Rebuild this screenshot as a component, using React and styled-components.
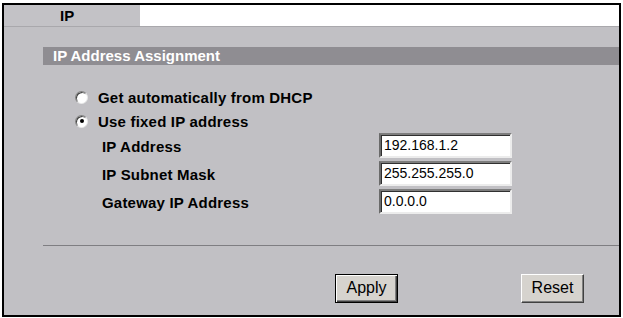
import React from 'react'
import styled, { createGlobalStyle } from 'styled-components'

const GlobalStyle = createGlobalStyle`
  html, body {
    margin: 0;
    padding: 0;
    background: #fff;
  }
  body {
    font-family: "Liberation Sans", Arial, sans-serif;
  }
`

const Frame = styled.div`
  box-sizing: border-box;
  margin: 3px 2px 0 2px;
  height: 314px;
  border: 2px solid #000;
  background: #c1c0c4;
  display: flex;
  flex-direction: column;
`

const TabBar = styled.div`
  display: flex;
  height: 21px;
  border-bottom: 1px solid #a9a8ac;
`

const Tab = styled.div`
  width: 136px;
  padding-left: 56px;
  box-sizing: border-box;
  background: #c3c2c6;
  font-weight: bold;
  font-size: 15px;
  line-height: 21px;
  color: #000;
`

const TabFill = styled.div`
  flex: 1;
  background: #fff;
`

const Body = styled.div`
  flex: 1;
  display: flex;
  flex-direction: column;
`

const SectionBar = styled.div`
  margin: 20px 0 0 39px;
  height: 18px;
  padding-left: 10px;
  background: #8f8d92;
  color: #fff;
  font-weight: bold;
  font-size: 15px;
  line-height: 18px;
`

const Options = styled.div`
  margin-top: 20px;
  padding-left: 71px;
  display: flex;
  flex-direction: column;
`

const RadioRow = styled.label`
  display: flex;
  align-items: center;
  height: 24px;
  gap: 10px;
  font-weight: bold;
  font-size: 15px;
  letter-spacing: 0.2px;
  color: #000;
`

const RadioDot = styled.span`
  box-sizing: border-box;
  width: 13px;
  height: 13px;
  border-radius: 50%;
  background: #fff;
  border: 1px solid;
  border-color: #808080 #e8e8e8 #e8e8e8 #808080;
  box-shadow: inset 1px 1px 0 #404040;
  display: flex;
  align-items: center;
  justify-content: center;
  &::after {
    content: '';
    width: 4px;
    height: 4px;
    border-radius: 50%;
    background: ${p => (p.checked ? '#000' : 'transparent')};
  }
`

const Fields = styled.div`
  display: flex;
  flex-direction: column;
  gap: 3px;
  padding-left: 27px;
`

const FieldRow = styled.div`
  display: flex;
  align-items: center;
  height: 25px;
`

const FieldLabel = styled.span`
  width: 277px;
  padding-top: 2px;
  font-weight: bold;
  font-size: 15px;
  letter-spacing: 0.2px;
  color: #000;
`

const TextBox = styled.div`
  box-sizing: border-box;
  width: 133px;
  height: 25px;
  background: #fff;
  border: 2px solid;
  border-color: #7d7d7d #ececec #ececec #6a6a6a;
  box-shadow: inset 1px 1px 0 #303030;
  padding: 0 0 0 3px;
  font-size: 14px;
  line-height: 21px;
  color: #000;
`

const Separator = styled.hr`
  margin: 31px 0 0 39px;
  border: none;
  border-top: 1px solid #7f7e82;
  height: 0;
`

const ButtonRow = styled.div`
  display: flex;
  margin-top: 28px;
  padding-left: 331px;
  gap: 123px;
`

const Button = styled.div`
  box-sizing: border-box;
  width: 63px;
  height: 29px;
  background: #d6d3ce;
  border: 1px solid;
  border-color: ${p => (p.primary ? '#000' : '#fff #404040 #404040 #fff')};
  box-shadow: ${p =>
    p.primary
      ? 'inset 1px 1px 0 #fff, inset -1px -1px 0 #404040, inset -2px -2px 0 #808080'
      : 'inset -1px -1px 0 #808080'};
  font-size: 16px;
  line-height: 26px;
  text-align: center;
  color: #000;
`

const fields = [
  { label: 'IP Address', value: '192.168.1.2' },
  { label: 'IP Subnet Mask', value: '255.255.255.0' },
  { label: 'Gateway IP Address', value: '0.0.0.0' },
]

export default function App() {
  return (
    <>
      <GlobalStyle />
      <Frame>
        <TabBar>
          <Tab>IP</Tab>
          <TabFill />
        </TabBar>
        <Body>
          <SectionBar>IP Address Assignment</SectionBar>
          <Options>
            <RadioRow>
              <RadioDot />
              Get automatically from DHCP
            </RadioRow>
            <RadioRow>
              <RadioDot checked />
              Use fixed IP address
            </RadioRow>
            <Fields>
              {fields.map(f => (
                <FieldRow key={f.label}>
                  <FieldLabel>{f.label}</FieldLabel>
                  <TextBox>{f.value}</TextBox>
                </FieldRow>
              ))}
            </Fields>
          </Options>
          <Separator />
          <ButtonRow>
            <Button primary>Apply</Button>
            <Button>Reset</Button>
          </ButtonRow>
        </Body>
      </Frame>
    </>
  )
}
